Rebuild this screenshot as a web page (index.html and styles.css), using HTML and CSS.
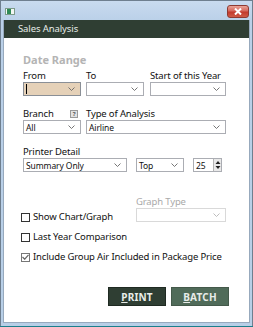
FILE: index.html
```html
<!DOCTYPE html>
<html>
<head>
<meta charset="utf-8">
<link rel="stylesheet" href="styles.css">
</head>
<body>
<div class="window">
  <div class="titlebar">
    <span class="appicon"><span class="appicon-green"></span></span>
    <span class="close"><svg width="10" height="7" viewBox="0 0 10 7"><path d="M2 0.5 L8 6.5 M8 0.5 L2 6.5" stroke="#fff" stroke-width="2"/></svg></span>
  </div>
  <div class="client">
    <div class="header">Sales Analysis</div>
    <div class="content">
      <div class="section-title">Date Range</div>

      <div class="row row-dates">
        <div class="field w58">
          <div class="label">From</div>
          <div class="select focused"><span class="cursor"></span><span class="value"></span><svg class="chev" width="7" height="4" viewBox="0 0 7 4"><path d="M0.5 0.5 L3.5 3.5 L6.5 0.5" fill="none" stroke="#666" stroke-width="0.9"/></svg></div>
        </div>
        <div class="field w58">
          <div class="label">To</div>
          <div class="select"><span class="value"></span><svg class="chev" width="7" height="4" viewBox="0 0 7 4"><path d="M0.5 0.5 L3.5 3.5 L6.5 0.5" fill="none" stroke="#666" stroke-width="0.9"/></svg></div>
        </div>
        <div class="field w76 ml1">
          <div class="label">Start of this Year</div>
          <div class="select"><span class="value"></span><svg class="chev" width="7" height="4" viewBox="0 0 7 4"><path d="M0.5 0.5 L3.5 3.5 L6.5 0.5" fill="none" stroke="#666" stroke-width="0.9"/></svg></div>
        </div>
      </div>

      <div class="row row-branch">
        <div class="field w58">
          <div class="label label-help">Branch<span class="help">?</span></div>
          <div class="select"><span class="value">All</span><svg class="chev" width="7" height="4" viewBox="0 0 7 4"><path d="M0.5 0.5 L3.5 3.5 L6.5 0.5" fill="none" stroke="#666" stroke-width="0.9"/></svg></div>
        </div>
        <div class="field w140">
          <div class="label">Type of Analysis</div>
          <div class="select"><span class="value">Airline</span><svg class="chev" width="7" height="4" viewBox="0 0 7 4"><path d="M0.5 0.5 L3.5 3.5 L6.5 0.5" fill="none" stroke="#666" stroke-width="0.9"/></svg></div>
        </div>
      </div>

      <div class="row row-printer">
        <div class="field w104">
          <div class="label">Printer Detail</div>
          <div class="select"><span class="value">Summary Only</span><svg class="chev" width="7" height="4" viewBox="0 0 7 4"><path d="M0.5 0.5 L3.5 3.5 L6.5 0.5" fill="none" stroke="#666" stroke-width="0.9"/></svg></div>
        </div>
        <div class="field w48">
          <div class="label">&nbsp;</div>
          <div class="select"><span class="value">Top</span><svg class="chev" width="7" height="4" viewBox="0 0 7 4"><path d="M0.5 0.5 L3.5 3.5 L6.5 0.5" fill="none" stroke="#666" stroke-width="0.9"/></svg></div>
        </div>
        <div class="field w29">
          <div class="label">&nbsp;</div>
          <div class="spinner"><span class="value">25</span>
            <span class="spin-btn"><svg width="6" height="10" viewBox="0 0 6 10"><path d="M3 1 L5.5 4 L0.5 4 Z M0.5 6 L5.5 6 L3 9 Z" fill="#222"/></svg></span>
          </div>
        </div>
      </div>

      <div class="row row-graph">
        <label class="check check-graph"><span class="box"></span>Show Chart/Graph</label>
        <div class="field w90">
          <div class="label disabled">Graph Type</div>
          <div class="select disabled-select"><span class="value"></span><svg class="chev" width="7" height="4" viewBox="0 0 7 4"><path d="M0.5 0.5 L3.5 3.5 L6.5 0.5" fill="none" stroke="#b5b5b5" stroke-width="0.9"/></svg></div>
        </div>
      </div>

      <label class="check check-last"><span class="box"></span>Last Year Comparison</label>
      <label class="check check-incl"><span class="box checked"><svg width="7" height="6" viewBox="0 0 7 6"><path d="M0.5 3 L2.7 5.2 L6.5 0.8" fill="none" stroke="#666" stroke-width="1.2"/></svg></span>Include Group Air Included in Package Price</label>

      <div class="buttons">
        <button class="btn btn-print"><u>P</u>RINT</button>
        <button class="btn btn-batch"><u>B</u>ATCH</button>
      </div>
    </div>
  </div>
</div>
</body>
</html>
```

FILE: styles.css
```css
html, body {
  margin: 0;
  padding: 0;
  background: #1b7f8c;
}
body {
  width: 253px;
  height: 327px;
  overflow: hidden;
  font-family: "Noto Sans", "DejaVu Sans", sans-serif;
}
.window {
  width: 253px;
  height: 326px;
  box-sizing: border-box;
  border: 1px solid #6f7f8f;
  border-bottom: none;
  background: linear-gradient(#c9dbef, #bad0e8 20px, #b8cfe7);
  display: flex;
  flex-direction: column;
}
.titlebar {
  height: 19px;
  flex: none;
  display: flex;
  align-items: flex-start;
  justify-content: space-between;
}
.appicon {
  margin: 7px 0 0 4px;
  width: 10px;
  height: 7px;
  box-sizing: border-box;
  background: #f4f7f4;
  border: 1px solid #7d9b8a;
  display: flex;
}
.appicon-green {
  width: 4px;
  height: 5px;
  margin-left: 1px;
  background: #2e8a55;
}
.close {
  margin: 4px 3px 0 0;
  width: 22px;
  height: 13px;
  box-sizing: border-box;
  border: 1px solid #8e3a32;
  border-radius: 3px;
  background: linear-gradient(#e9a497, #d5665a 45%, #c2392c 55%, #cf5a45);
  display: flex;
  align-items: center;
  justify-content: center;
}
.client {
  flex: 1;
  margin: 0 2px 3px 2px;
  display: flex;
  flex-direction: column;
  background: #fff;
  border-left: 1px solid #97a9bd;
  border-right: 1px solid #97a9bd;
  border-bottom: 1px solid #97a9bd;
}
.header {
  height: 18px;
  flex: none;
  background: #2f3e33;
  color: #e6ece8;
  font-size: 9.5px;
  letter-spacing: -0.1px;
  line-height: 18px;
  padding-left: 14px;
}
.content {
  flex: 1;
  padding: 14px 0 0 19px;
  font-size: 9.5px;
  letter-spacing: -0.15px;
  color: #111;
}
.section-title {
  font-size: 11px;
  font-weight: bold;
  color: #b4b4b4;
  letter-spacing: 0;
  line-height: 16px;
  height: 16px;
}
.row {
  display: flex;
  align-items: flex-start;
}
.row-dates { margin-top: 2px; gap: 5px; }
.row-branch { margin-top: 12px; gap: 5px; }
.row-printer { margin-top: 12px; gap: 9px; }
.row-graph { margin-top: 24px; gap: 0; }
.ml1 { margin-left: 1px; }
.field { display: flex; flex-direction: column; }
.w58 { width: 58px; }
.w76 { width: 76px; }
.w140 { width: 140px; }
.w104 { width: 104px; }
.w48 { width: 48px; }
.w29 { width: 29px; }
.w90 { width: 90px; }
.label {
  line-height: 12px;
  height: 12px;
  white-space: nowrap;
}
.label.disabled { color: #a9a9a9; }
.label-help {
  display: flex;
  justify-content: space-between;
  padding-right: 3px;
}
.help {
  width: 8px;
  height: 8px;
  margin-top: 2px;
  box-sizing: border-box;
  border: 1px solid #9a9a9a;
  background: #e2e2e2;
  color: #555;
  font-size: 6px;
  line-height: 6px;
  text-align: center;
  font-weight: bold;
}
.select {
  height: 14px;
  box-sizing: border-box;
  border: 1px solid #abadb3;
  background: #fff;
  display: flex;
  align-items: center;
  padding: 0 5px 0 2px;
  font-size: 8.5px;
  letter-spacing: -0.1px;
}
.select .value { flex: 1; white-space: nowrap; }
.select.focused { background: #e5d1b8; border-color: #8a8f96; }
.cursor {
  width: 1px;
  height: 10px;
  background: #000;
  margin-right: 1px;
}
.disabled-select { border-color: #d9d9d9; }
.chev { flex: none; }
.spinner {
  height: 14px;
  box-sizing: border-box;
  border: 1px solid #abadb3;
  display: flex;
  align-items: center;
  padding-left: 2px;
  font-size: 8.5px;
}
.spinner .value { flex: 1; }
.spin-btn {
  width: 8px;
  height: 12px;
  box-sizing: border-box;
  border-left: 1px solid #b5b5b5;
  background: #e9e9e9;
  display: flex;
  align-items: center;
  justify-content: center;
}
.check {
  display: flex;
  align-items: center;
  white-space: nowrap;
  margin-left: -2px;
  height: 12px;
  line-height: 12px;
}
.check .box {
  width: 9px;
  height: 9px;
  box-sizing: border-box;
  border: 1px solid #333;
  background: #fff;
  margin-right: 3px;
  display: flex;
  align-items: center;
  justify-content: center;
}
.check .box.checked { border-color: #777; }
.check-graph { width: 115px; margin-top: 15px; }
.check-last { margin-top: 8px; }
.check-incl { margin-top: 8px; }
.buttons {
  display: flex;
  gap: 5px;
  margin: 24px 0 0 85px;
}
.btn {
  width: 58px;
  height: 19px;
  border: 1px solid #1f2a22;
  color: #e8ece9;
  font-family: "Noto Sans", sans-serif;
  font-size: 10px;
  font-weight: bold;
  padding: 0;
  letter-spacing: 0.2px;
}
.btn-print { background: #2f3e33; }
.btn-batch { background: #506b59; border-color: #44594a; }
```
